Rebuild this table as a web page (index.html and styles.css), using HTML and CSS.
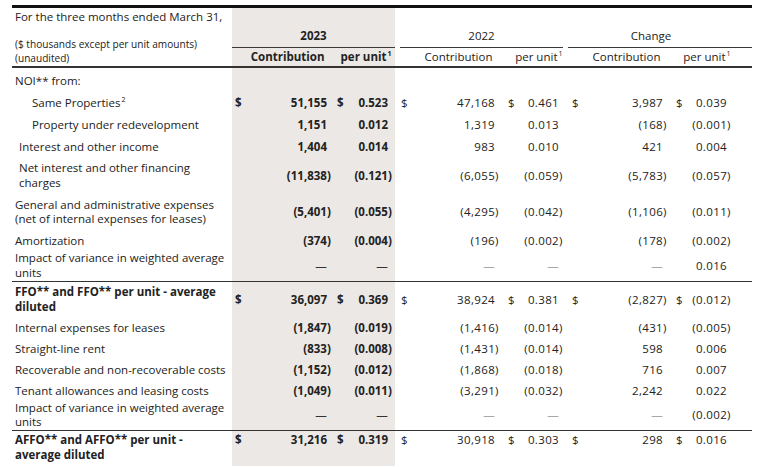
FILE: index.html
```html
<!DOCTYPE html>
<html lang="en">
<head>
<meta charset="utf-8">
<title>FFO and AFFO contribution</title>
<link rel="stylesheet" href="styles.css">
</head>
<body>
<table class="fin">
  <colgroup>
    <col class="w-lab"><col class="w-c1"><col class="w-n1"><col class="w-c2"><col class="w-p1">
    <col class="w-c3"><col class="w-n2"><col class="w-c4"><col class="w-p2">
    <col class="w-c5"><col class="w-n3"><col class="w-c6"><col class="w-p3"><col class="w-tail">
  </colgroup>
  <thead>
    <tr class="ha">
      <th class="lab-head" rowspan="2">
        <div class="period">For the three months ended March 31,</div>
        <div class="units">($ thousands except per unit amounts)<br>(unaudited)</div>
      </th>
      <th class="g grp-cell" colspan="4"><div class="grp g1 bold">2023</div></th>
      <th class="grp-cell" colspan="4"><div class="grp g2">2022</div></th>
      <th class="grp-cell" colspan="4"><div class="grp g3">Change</div></th>
      <th class="grp-cell"><div class="grp g4">&nbsp;</div></th>
    </tr>
    <tr class="hb">
      <th class="g sub contrib bold" colspan="2">Contribution</th>
      <th class="g sub pu bold" colspan="2">per unit<sup>1</sup></th>
      <th class="sub contrib" colspan="2">Contribution</th>
      <th class="sub pu" colspan="2">per unit<sup>1</sup></th>
      <th class="sub contrib" colspan="2">Contribution</th>
      <th class="sub pu" colspan="2">per unit<sup>1</sup></th>
      <th class="sub"></th>
    </tr>
  </thead>
  <tbody>
    <tr class="first">
      <td class="lab">NOI** from:</td>
      <td class="g"></td><td class="g"></td><td class="g"></td><td class="g"></td>
      <td></td><td></td><td></td><td></td><td></td><td></td><td></td><td></td><td></td>
    </tr>
    <tr>
      <td class="lab ind2">Same Properties<sup>2</sup></td>
      <td class="g cur bold">$</td><td class="g num bold">51,155</td><td class="g cur bold">$</td><td class="g num bold">0.523</td>
      <td class="cur">$</td><td class="num">47,168</td><td class="cur">$</td><td class="num">0.461</td>
      <td class="cur">$</td><td class="num">3,987</td><td class="cur">$</td><td class="num">0.039</td><td></td>
    </tr>
    <tr>
      <td class="lab ind2">Property under redevelopment</td>
      <td class="g"></td><td class="g num bold">1,151</td><td class="g"></td><td class="g num bold">0.012</td>
      <td></td><td class="num">1,319</td><td></td><td class="num">0.013</td>
      <td></td><td class="num"><span class="neg">(168)</span></td><td></td><td class="num"><span class="neg">(0.001)</span></td><td></td>
    </tr>
    <tr>
      <td class="lab ind1">Interest and other income</td>
      <td class="g"></td><td class="g num bold">1,404</td><td class="g"></td><td class="g num bold">0.014</td>
      <td></td><td class="num">983</td><td></td><td class="num">0.010</td>
      <td></td><td class="num">421</td><td></td><td class="num">0.004</td><td></td>
    </tr>
    <tr>
      <td class="lab ind1">Net interest and other financing<br>charges</td>
      <td class="g"></td><td class="g num bold"><span class="neg">(11,838)</span></td><td class="g"></td><td class="g num bold"><span class="neg">(0.121)</span></td>
      <td></td><td class="num"><span class="neg">(6,055)</span></td><td></td><td class="num"><span class="neg">(0.059)</span></td>
      <td></td><td class="num"><span class="neg">(5,783)</span></td><td></td><td class="num"><span class="neg">(0.057)</span></td><td></td>
    </tr>
    <tr>
      <td class="lab">General and administrative expenses<br>(net of internal expenses for leases)</td>
      <td class="g"></td><td class="g num bold"><span class="neg">(5,401)</span></td><td class="g"></td><td class="g num bold"><span class="neg">(0.055)</span></td>
      <td></td><td class="num"><span class="neg">(4,295)</span></td><td></td><td class="num"><span class="neg">(0.042)</span></td>
      <td></td><td class="num"><span class="neg">(1,106)</span></td><td></td><td class="num"><span class="neg">(0.011)</span></td><td></td>
    </tr>
    <tr class="pre1">
      <td class="lab">Amortization</td>
      <td class="g"></td><td class="g num bold"><span class="neg">(374)</span></td><td class="g"></td><td class="g num bold"><span class="neg">(0.004)</span></td>
      <td></td><td class="num"><span class="neg">(196)</span></td><td></td><td class="num"><span class="neg">(0.002)</span></td>
      <td></td><td class="num"><span class="neg">(178)</span></td><td></td><td class="num"><span class="neg">(0.002)</span></td><td></td>
    </tr>
    <tr class="tight">
      <td class="lab">Impact of variance in weighted average<br>units</td>
      <td class="g"></td><td class="g num dash-d">—</td><td class="g"></td><td class="g num dash-d">—</td>
      <td></td><td class="num dash-l">—</td><td></td><td class="num dash-l">—</td>
      <td></td><td class="num dash-l">—</td><td></td><td class="num">0.016</td><td></td>
    </tr>
    <tr class="sep">
      <td class="lab bold">FFO** and FFO** per unit - average<br>diluted</td>
      <td class="g cur bold">$</td><td class="g num bold">36,097</td><td class="g cur bold">$</td><td class="g num bold">0.369</td>
      <td class="cur">$</td><td class="num">38,924</td><td class="cur">$</td><td class="num">0.381</td>
      <td class="cur">$</td><td class="num"><span class="neg">(2,827)</span></td><td class="cur">$</td><td class="num"><span class="neg">(0.012)</span></td><td></td>
    </tr>
    <tr class="sec2 after-sep">
      <td class="lab">Internal expenses for leases</td>
      <td class="g"></td><td class="g num bold"><span class="neg">(1,847)</span></td><td class="g"></td><td class="g num bold"><span class="neg">(0.019)</span></td>
      <td></td><td class="num"><span class="neg">(1,416)</span></td><td></td><td class="num"><span class="neg">(0.014)</span></td>
      <td></td><td class="num"><span class="neg">(431)</span></td><td></td><td class="num"><span class="neg">(0.005)</span></td><td></td>
    </tr>
    <tr class="sec2">
      <td class="lab">Straight-line rent</td>
      <td class="g"></td><td class="g num bold"><span class="neg">(833)</span></td><td class="g"></td><td class="g num bold"><span class="neg">(0.008)</span></td>
      <td></td><td class="num"><span class="neg">(1,431)</span></td><td></td><td class="num"><span class="neg">(0.014)</span></td>
      <td></td><td class="num">598</td><td></td><td class="num">0.006</td><td></td>
    </tr>
    <tr class="sec2">
      <td class="lab">Recoverable and non-recoverable costs</td>
      <td class="g"></td><td class="g num bold"><span class="neg">(1,152)</span></td><td class="g"></td><td class="g num bold"><span class="neg">(0.012)</span></td>
      <td></td><td class="num"><span class="neg">(1,868)</span></td><td></td><td class="num"><span class="neg">(0.018)</span></td>
      <td></td><td class="num">716</td><td></td><td class="num">0.007</td><td></td>
    </tr>
    <tr class="sec2 pre2">
      <td class="lab">Tenant allowances and leasing costs</td>
      <td class="g"></td><td class="g num bold"><span class="neg">(1,049)</span></td><td class="g"></td><td class="g num bold"><span class="neg">(0.011)</span></td>
      <td></td><td class="num"><span class="neg">(3,291)</span></td><td></td><td class="num"><span class="neg">(0.032)</span></td>
      <td></td><td class="num">2,242</td><td></td><td class="num">0.022</td><td></td>
    </tr>
    <tr class="tight">
      <td class="lab">Impact of variance in weighted average<br>units</td>
      <td class="g"></td><td class="g num dash-d">—</td><td class="g"></td><td class="g num dash-d">—</td>
      <td></td><td class="num dash-l">—</td><td></td><td class="num dash-l">—</td>
      <td></td><td class="num dash-l">—</td><td></td><td class="num"><span class="neg">(0.002)</span></td><td></td>
    </tr>
    <tr class="sep last top-al">
      <td class="lab bold">AFFO** and AFFO** per unit -<br>average diluted</td>
      <td class="g cur bold">$</td><td class="g num bold">31,216</td><td class="g cur bold">$</td><td class="g num bold">0.319</td>
      <td class="cur">$</td><td class="num">30,918</td><td class="cur">$</td><td class="num">0.303</td>
      <td class="cur">$</td><td class="num">298</td><td class="cur">$</td><td class="num">0.016</td><td></td>
    </tr>
  </tbody>
</table>
</body>
</html>
```

FILE: styles.css
```css
html, body {
  margin: 0;
  background: #ffffff;
}

body {
  padding: 5px 0 0 12px;
}

.fin {
  border-collapse: separate;
  border-spacing: 0;
  table-layout: fixed;
  width: 740px;
  border-top: 3px solid #111111;
  font-family: "Open Sans", "Liberation Sans", sans-serif;
  font-size: 11.5px;
  line-height: 14.6px;
  color: #222222;
}

.w-lab { width: 220px; }
.w-c1 { width: 20px; }
.w-n1 { width: 82px; }
.w-c2 { width: 18px; }
.w-p1 { width: 43px; }
.w-c3 { width: 25px; }
.w-n2 { width: 82px; }
.w-c4 { width: 18px; }
.w-p2 { width: 46px; }
.w-c5 { width: 24px; }
.w-n3 { width: 80px; }
.w-c6 { width: 20px; }
.w-p3 { width: 44px; }
.w-tail { width: 18px; }

th, td {
  padding: 0;
  font-weight: normal;
  white-space: nowrap;
}

.g { background: #ebe8e5; }
.bold { font-weight: 700; }

sup {
  font-size: 7px;
  line-height: 0;
  vertical-align: 5px;
  margin-left: 1px;
}

/* header */
.ha { height: 40px; }

.lab-head {
  text-align: left;
  vertical-align: top;
  padding: 2px 0 0 3px;
  border-bottom: 2px solid #333333;
}

.period {
  line-height: 14.6px;
}

.units {
  margin-top: 12.5px;
  font-size: 10.1px;
  line-height: 14px;
}

.grp-cell {
  vertical-align: bottom;
}

.grp {
  text-align: center;
  padding-bottom: 3px;
  border-bottom: 1.5px solid #3a3a3a;
}

.g2 { margin: 0 3px 0 5px; }
.g3 { margin-left: 2px; }

.sub {
  padding: 2px 0 1px;
  border-bottom: 2px solid #333333;
  vertical-align: bottom;
}

.contrib {
  text-align: right;
  padding-right: 9.5px;
}

.pu {
  text-align: right;
  padding-right: 3.5px;
}

/* body */
td {
  padding-top: 3.6px;
  padding-bottom: 3.6px;
  vertical-align: middle;
}

.first td { padding-top: 6.7px; }

.pre1 td { padding-bottom: 2.7px; }

.tight td {
  padding-top: 0;
  padding-bottom: 0;
}

.sep td {
  border-top: 1.5px solid #333333;
  padding-top: 3.7px;
  padding-bottom: 3.35px;
}

.sec2 td {
  padding-top: 3.2px;
  padding-bottom: 3.2px;
}

.after-sep td { padding-top: 3.35px; }

.sec2.pre2 td { padding-bottom: 2.1px; }

.last td { padding-top: 2px; }

.top-al td { vertical-align: top; }

.lab {
  text-align: left;
  padding-left: 3px;
}

.ind1 { padding-left: 7px; }
.ind2 { padding-left: 20px; }

.cur {
  text-align: left;
}

td.cur { padding-left: 6px; }
td.g.cur { padding-left: 3px; }

.num {
  text-align: right;
  padding-right: 7px;
  letter-spacing: 0.35px;
}

.num.bold { letter-spacing: 0; }

.neg {
  margin-right: -3.8px;
}

.dash-d { color: #333333; }
.dash-l { color: #a8a8a8; }
```
